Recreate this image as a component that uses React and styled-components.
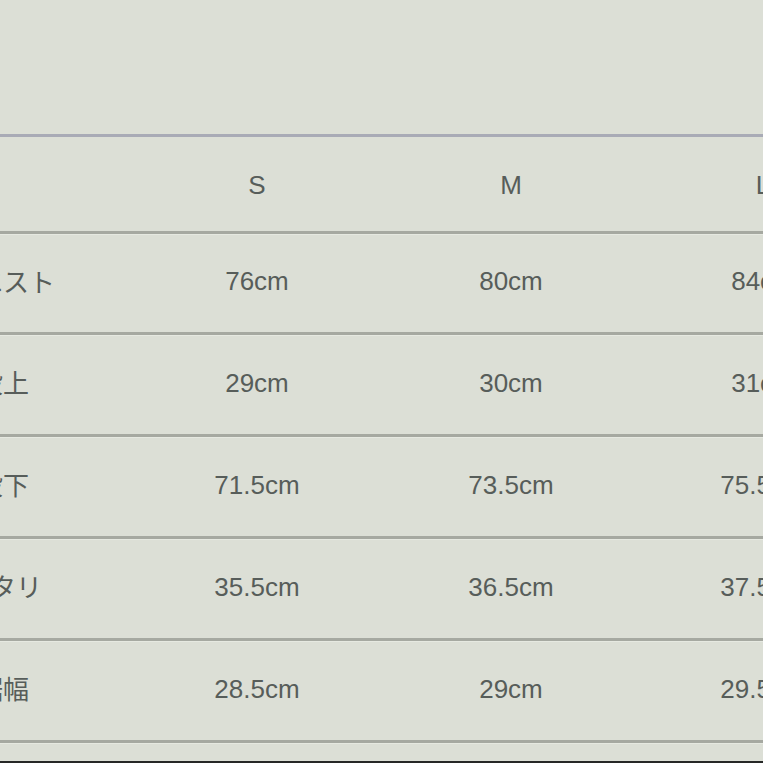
import React from "react";
import styled, { createGlobalStyle } from "styled-components";

const Global = createGlobalStyle`
  html, body { margin: 0; padding: 0; background: #dcdfd6; overflow: hidden; }
  body { font-family: "Liberation Sans", "Noto Sans CJK JP", sans-serif; }
`;

const Page = styled.div`
  width: 763px;
  height: 763px;
  box-sizing: border-box;
  overflow: hidden;
  background: #dcdfd6;
  padding-top: 134px;
  border-bottom: 2px solid #262826;
`;

const Table = styled.div`
  margin-left: -124px;
  width: 1012px;
  border-top: 3px solid #a9abb6;
`;

const Row = styled.div`
  display: grid;
  grid-template-columns: 254px 254px 254px 250px;
  height: ${(p) => p.$h}px;
  border-bottom: 3px solid #a6a9a1;
  box-shadow: 0 1px 0 #e6e9e1;
`;

const Cell = styled.div`
  display: flex;
  align-items: center;
  justify-content: center;
  padding-bottom: ${(p) => (p.$head ? 0 : 3)}px;
  padding-top: ${(p) => (p.$head ? 2 : 0)}px;
  color: #575d5a;
  font-size: 26px;
  font-family: "Liberation Sans", "Noto Sans CJK JP", sans-serif;
`;

const Label = styled(Cell)`
  padding-bottom: 6px;
  font-family: "Noto Sans CJK JP", sans-serif;
  font-weight: 400;
`;

const rows = [
  ["ウエスト", "76cm", "80cm", "84cm"],
  ["股上", "29cm", "30cm", "31cm"],
  ["股下", "71.5cm", "73.5cm", "75.5cm"],
  ["ワタリ", "35.5cm", "36.5cm", "37.5cm"],
  ["裾幅", "28.5cm", "29cm", "29.5cm"],
];

export default function App() {
  return (
    <Page>
      <Global />
      <Table>
        <Row $h={94}>
          <Cell $head />
          <Cell $head>S</Cell>
          <Cell $head>M</Cell>
          <Cell $head>L</Cell>
        </Row>
        {rows.map((r, i) => (
          <Row key={i} $h={i === 0 ? 98 : 99}>
            <Label>{r[0]}</Label>
            {r.slice(1).map((c, j) => (
              <Cell key={j}>{c}</Cell>
            ))}
          </Row>
        ))}
      </Table>
    </Page>
  );
}
